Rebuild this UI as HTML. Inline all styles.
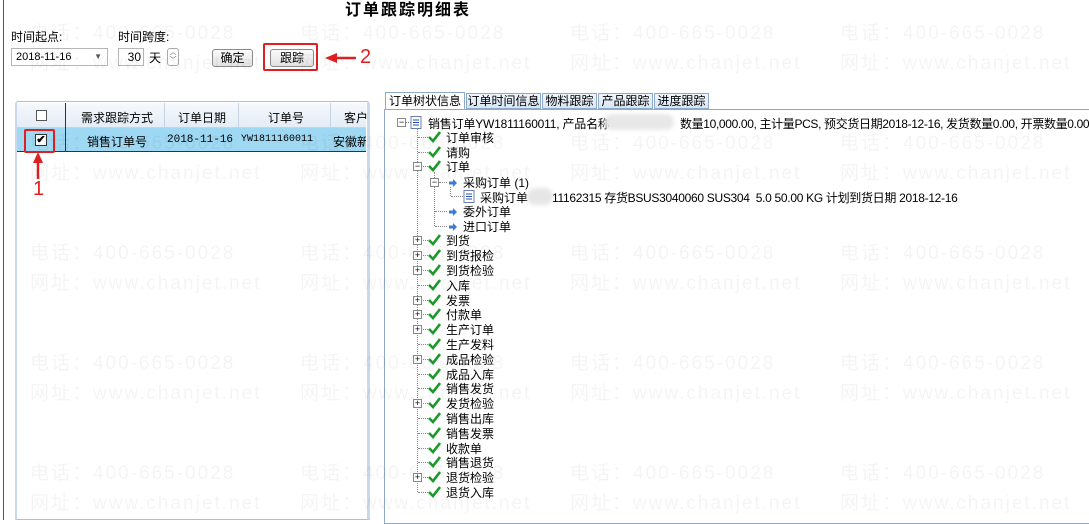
<!DOCTYPE html>
<html><head><meta charset="utf-8"><style>
*{margin:0;padding:0;box-sizing:border-box}
body{width:1089px;height:520px;overflow:hidden;background:#fff;position:relative;font-family:"Liberation Sans","Noto Sans CJK SC",sans-serif;font-size:12px;color:#000}
.a{position:absolute;white-space:nowrap}
.wm{position:absolute;font-size:19px;color:rgba(0,0,0,0.045);letter-spacing:2px;white-space:nowrap;z-index:50;pointer-events:none}
.btn{position:absolute;border:1px solid #8a8a8a;border-radius:3px;background:linear-gradient(#fafafa,#e2e2e2);text-align:center;line-height:17px;font-size:12px}
.red{position:absolute;border:2px solid #e02020;border-radius:2px}
.pb{position:absolute;width:9px;height:9px;border:1px solid #888;background:#fff;font-size:9px;line-height:7px;text-align:center;color:#000}
</style></head><body>
<div class="a" style="left:3px;top:0;width:1px;height:520px;background:#3a5a8a"></div>
<div class="a" style="left:345px;top:-4px;font-size:16px;font-weight:bold;letter-spacing:2px">订单跟踪明细表</div>
<div class="a" style="left:11px;top:28px">时间起点:</div>
<div class="a" style="left:118px;top:28px">时间跨度:</div>
<div class="a" style="left:11px;top:48px;width:97px;height:18px;border:1px solid #b5b5b5;font-size:11px;line-height:16px;padding-left:4px">2018-11-16<span style="position:absolute;right:5px;top:0;font-size:8px;color:#555">▼</span></div>
<div class="a" style="left:118px;top:48px;width:26px;height:18px;border:1px solid #b5b5b5;text-align:right;padding-right:2px;line-height:16px">30</div>
<div class="a" style="left:149px;top:49px">天</div>
<div class="a" style="left:167px;top:48px;width:12px;height:18px;border:1px solid #aaa;border-radius:3px;font-size:7px;line-height:8px;text-align:center;color:#555">︿<br>﹀</div>
<div class="btn" style="left:212px;top:49px;width:41px;height:18px">确定</div>
<div class="btn" style="left:270px;top:49px;width:44px;height:18px">跟踪</div>
<div class="red" style="left:263px;top:43px;width:55px;height:28px"></div>
<svg class="a" style="left:325px;top:52px" width="32" height="12"><path d="M8 6 L31 6" stroke="#e02020" stroke-width="2.5"/><path d="M0 6 L12 1 L12 11 Z" fill="#e02020"/></svg>
<div class="a" style="left:360px;top:46px;font-size:20px;color:#e02020">2</div>

<!-- left panel -->
<div class="a" style="left:15px;top:101px;width:355px;height:419px;border:1px solid #a9c0dc;border-left:2px solid #c9d8ea;border-right:3px solid #c9d8ea;border-radius:3px 3px 0 0"></div>
<div class="a" style="left:17px;top:103px;width:349px;height:25px;background:linear-gradient(#f6f9fd,#e4ecf6);border-bottom:1px solid #c5d3e3"></div>
<div class="a" style="left:17px;top:128px;width:349px;height:24px;background:#9ed8f3;border-bottom:1px solid #333"></div>
<div class="a" style="left:65px;top:103px;width:1px;height:49px;background:#333"></div>
<div class="a" style="left:164px;top:103px;width:1px;height:25px;background:#c5d3e3"></div>
<div class="a" style="left:238px;top:103px;width:1px;height:25px;background:#c5d3e3"></div>
<div class="a" style="left:330px;top:103px;width:1px;height:25px;background:#c5d3e3"></div>
<div class="a" style="left:36px;top:110px;width:11px;height:11px;border:1px solid #555;background:#fff"></div>
<div class="a" style="left:81px;top:109px">需求跟踪方式</div>
<div class="a" style="left:178px;top:109px">订单日期</div>
<div class="a" style="left:268px;top:109px">订单号</div>
<div class="a" style="left:344px;top:109px">客户</div>
<div class="a" style="left:35px;top:134px;width:12px;height:12px;border:1px solid #333;background:#fff;font-size:11px;line-height:10px;text-align:center;font-weight:bold">✔</div>
<div class="red" style="left:24px;top:129px;width:31px;height:24px"></div>
<div class="a" style="left:87px;top:133px">销售订单号</div>
<div class="a" style="left:167px;top:134px;font-family:'Liberation Mono',monospace;font-size:11px">2018-11-16</div>
<div class="a" style="left:241px;top:134px;font-family:'Liberation Mono',monospace;font-size:10px">YW1811160011</div>
<div class="a" style="left:333px;top:133px;width:33px;overflow:hidden">安徽新</div>
<svg class="a" style="left:32px;top:152px" width="12" height="28"><path d="M6 27 L6 8" stroke="#e02020" stroke-width="2.5"/><path d="M6 0 L1 11 L11 11 Z" fill="#e02020"/></svg>
<div class="a" style="left:33px;top:178px;font-size:20px;color:#e02020">1</div>

<!-- tabs -->
<div class="a" style="left:385px;top:92px;width:80px;height:18px;border:1px solid #8fa9c8;border-bottom:none;background:#fff;text-align:center;line-height:17px">订单树状信息</div>
<div class="a" style="left:466px;top:93px;width:75px;height:16px;border:1px solid #8fa9c8;background:linear-gradient(#f0f6fc,#d8e6f4);text-align:center;line-height:15px">订单时间信息</div>
<div class="a" style="left:542px;top:93px;width:55px;height:16px;border:1px solid #8fa9c8;background:linear-gradient(#f0f6fc,#d8e6f4);text-align:center;line-height:15px">物料跟踪</div>
<div class="a" style="left:598px;top:93px;width:55px;height:16px;border:1px solid #8fa9c8;background:linear-gradient(#f0f6fc,#d8e6f4);text-align:center;line-height:15px">产品跟踪</div>
<div class="a" style="left:654px;top:93px;width:55px;height:16px;border:1px solid #8fa9c8;background:linear-gradient(#f0f6fc,#d8e6f4);text-align:center;line-height:15px">进度跟踪</div>
<div class="a" style="left:384px;top:109px;width:710px;height:415px;border:1px solid #8fa9c8;border-right:none"></div>

<div id="tree" class="a" style="left:0;top:0;width:1089px;height:520px"></div>

<div id="wms"></div>
<script>
var t=document.getElementById('tree'),h='';
var chk='<svg width="13" height="12" viewBox="0 0 13 12"><path d="M1 6 L5 10 L12 1" fill="none" stroke="#1a9a2a" stroke-width="2.6"/></svg>';
var doc='<svg width="12" height="13" viewBox="0 0 12 13"><rect x="1" y="0.5" width="10" height="12" fill="#fff" stroke="#6a7fb0"/><path d="M3 4H9M3 6.5H9M3 9H9" stroke="#2050b0"/></svg>';
var arr='<svg width="10" height="10" viewBox="0 0 10 10"><path d="M1 3.5H5V1L9 5L5 9V6.5H1Z" fill="#3a7ad8"/></svg>';
function dots(x,y,w,hh){return '<div style="position:absolute;left:'+x+'px;top:'+y+'px;width:'+(w||1)+'px;height:'+(hh||1)+'px;'+(w?'border-top:1px dotted #888':'border-left:1px dotted #888')+'"></div>';}
var y0=122,step=14.8;
h+='<div class="pb" style="left:397px;top:118px">−</div>'+dots(406,122,5)+'<div class="a" style="left:410px;top:116px">'+doc+'</div>';
h+='<div class="a" style="left:428px;top:115px;letter-spacing:-0.2px">销售订单YW1811160011, 产品名称</div><div class="a" style="left:604px;top:114px;width:70px;height:16px;background:#e8e8e8;border-radius:8px;filter:blur(2px)"></div><div class="a" style="left:680px;top:115px;letter-spacing:-0.35px">数量10,000.00, 主计量PCS, 预交货日期2018-12-16, 发货数量0.00, 开票数量0.00</div>';
h+='<div style="position:absolute;left:417px;top:128px;height:364px;border-left:1px dotted #888"></div>';
var items=[['订单审核',0],['请购',0],['订单',2],[null],[null],[null],[null],['到货',1],['到货报检',1],['到货检验',1],['入库',0],['发票',1],['付款单',1],['生产订单',1],['生产发料',0],['成品检验',1],['成品入库',0],['销售发货',0],['发货检验',1],['销售出库',0],['销售发票',0],['收款单',0],['销售退货',0],['退货检验',1],['退货入库',0]];
for(var i=0;i<items.length;i++){var it=items[i];if(!it[0])continue;var y=Math.round(y0+(i+1)*step);
 h+=dots(418,y,10);
 if(it[1])h+='<div class="pb" style="left:413px;top:'+(y-4)+'px">'+(it[1]==2?'−':'+')+'</div>';
 h+='<div class="a" style="left:428px;top:'+(y-6)+'px">'+chk+'</div><div class="a" style="left:446px;top:'+(y-8)+'px">'+it[0]+'</div>';}
h+='<div style="position:absolute;left:434px;top:172px;height:54px;border-left:1px dotted #888"></div>';
h+='<div class="pb" style="left:430px;top:178px">−</div>'+dots(439,182,8)+'<div class="a" style="left:448px;top:177px">'+arr+'</div><div class="a" style="left:463px;top:174px">采购订单 (1)</div>';
h+='<div style="position:absolute;left:450px;top:187px;height:9px;border-left:1px dotted #888"></div>'+dots(451,196,12)+'<div class="a" style="left:463px;top:190px">'+doc+'</div><div class="a" style="left:480px;top:189px">采购订单</div><div class="a" style="left:527px;top:188px;width:26px;height:17px;background:#e6e6e6;border-radius:9px;filter:blur(2px)"></div><div class="a" style="left:552px;top:189px;letter-spacing:-0.3px">11162315 存货BSUS3040060 SUS304&nbsp; 5.0 50.00 KG 计划到货日期 2018-12-16</div>';
h+=dots(435,211,12)+'<div class="a" style="left:448px;top:206px">'+arr+'</div><div class="a" style="left:463px;top:203px">委外订单</div>';
h+=dots(435,226,12)+'<div class="a" style="left:448px;top:221px">'+arr+'</div><div class="a" style="left:463px;top:218px">进口订单</div>';
t.innerHTML=h;
var w='',xs=[30,300,570,840],rs=[30,140,250,360,470];
rs.forEach(function(r){xs.forEach(function(x){w+='<div class="wm" style="left:'+x+'px;top:'+(r-12)+'px">电话：400-665-0028</div><div class="wm" style="left:'+x+'px;top:'+(r+18)+'px">网址：www.chanjet.net</div>';});});
document.getElementById('wms').innerHTML=w;
</script>
</body></html>
